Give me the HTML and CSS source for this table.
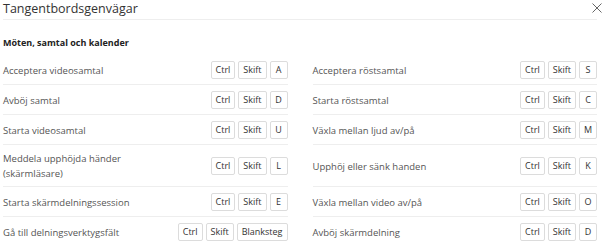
FILE: index.html
```html
<!DOCTYPE html>
<html lang="sv">
<head>
<meta charset="utf-8">
<link rel="stylesheet" href="styles.css">
</head>
<body>
<div class="dialog">
  <div class="header">
    <h1 class="title">Tangentbordsgenvägar</h1>
    <button class="close" aria-label="Stäng">
      <svg width="10" height="10" viewBox="0 0 10 10"><path d="M0.5 0.5 L9.5 9.5 M9.5 0.5 L0.5 9.5" stroke="#666" stroke-width="1" fill="none"/></svg>
    </button>
  </div>
  <h2 class="section">Möten, samtal och kalender</h2>
  <div class="grid">
    <div class="row"><span class="label">Acceptera videosamtal</span><span class="keys"><kbd class="key">Ctrl</kbd><kbd class="key">Skift</kbd><kbd class="key">A</kbd></span></div>
    <div class="row"><span class="label">Acceptera röstsamtal</span><span class="keys"><kbd class="key">Ctrl</kbd><kbd class="key">Skift</kbd><kbd class="key">S</kbd></span></div>
    <div class="row"><span class="label">Avböj samtal</span><span class="keys"><kbd class="key">Ctrl</kbd><kbd class="key">Skift</kbd><kbd class="key">D</kbd></span></div>
    <div class="row"><span class="label">Starta röstsamtal</span><span class="keys"><kbd class="key">Ctrl</kbd><kbd class="key">Skift</kbd><kbd class="key">C</kbd></span></div>
    <div class="row"><span class="label">Starta videosamtal</span><span class="keys"><kbd class="key">Ctrl</kbd><kbd class="key">Skift</kbd><kbd class="key">U</kbd></span></div>
    <div class="row"><span class="label">Växla mellan ljud av/på</span><span class="keys"><kbd class="key">Ctrl</kbd><kbd class="key">Skift</kbd><kbd class="key">M</kbd></span></div>
    <div class="row"><span class="label">Meddela upphöjda händer<br>(skärmläsare)</span><span class="keys"><kbd class="key">Ctrl</kbd><kbd class="key">Skift</kbd><kbd class="key">L</kbd></span></div>
    <div class="row"><span class="label">Upphöj eller sänk handen</span><span class="keys"><kbd class="key">Ctrl</kbd><kbd class="key">Skift</kbd><kbd class="key">K</kbd></span></div>
    <div class="row"><span class="label">Starta skärmdelningssession</span><span class="keys"><kbd class="key">Ctrl</kbd><kbd class="key">Skift</kbd><kbd class="key">E</kbd></span></div>
    <div class="row"><span class="label">Växla mellan video av/på</span><span class="keys"><kbd class="key">Ctrl</kbd><kbd class="key">Skift</kbd><kbd class="key">O</kbd></span></div>
    <div class="row last"><span class="label">Gå till delningsverktygsfält</span><span class="keys"><kbd class="key">Ctrl</kbd><kbd class="key">Skift</kbd><kbd class="key">Blanksteg</kbd></span></div>
    <div class="row last"><span class="label">Avböj skärmdelning</span><span class="keys"><kbd class="key">Ctrl</kbd><kbd class="key">Skift</kbd><kbd class="key">D</kbd></span></div>
  </div>
</div>
</body>
</html>
```
FILE: styles.css
```css
html, body {
  margin: 0;
  padding: 0;
  background: #ffffff;
}
body {
  font-family: "Open Sans", "Noto Sans", "DejaVu Sans", sans-serif;
  color: #333;
}
.dialog {
  padding: 0 8px 0 3px;
}
.header {
  display: flex;
  align-items: flex-start;
  justify-content: space-between;
  height: 19px;
  border-bottom: 1px solid #eeeeee;
}
.title {
  margin: 0;
  font-size: 12.5px;
  font-weight: 400;
  line-height: 17px;
  color: #333;
}
.close {
  border: 0;
  background: none;
  padding: 0;
  margin: 3px -5px 0 0;
  width: 10px;
  height: 10px;
  display: flex;
}
.section {
  margin: 0;
  padding-top: 16px;
  font-size: 9px;
  font-weight: 700;
  line-height: 14px;
  color: #222;
  height: 16px;
}
.grid {
  display: grid;
  grid-template-columns: 1fr 1fr;
  column-gap: 25px;
  margin-top: 3px;
}
.row {
  display: flex;
  align-items: center;
  justify-content: space-between;
  padding: 6px 0 5px;
  border-bottom: 1px solid #eeeeee;
}
.row.last {
  border-bottom: 0;
}
.label {
  font-size: 9.5px;
  line-height: 15px;
  color: #555;
}
.keys {
  display: flex;
  gap: 3px;
}
.key {
  font-family: inherit;
  font-size: 9px;
  line-height: 16px;
  height: 16px;
  padding: 0 4px;
  min-width: 8px;
  text-align: center;
  border: 1px solid #dcdcdc;
  border-radius: 2px;
  color: #333;
  background: #fff;
}
```
